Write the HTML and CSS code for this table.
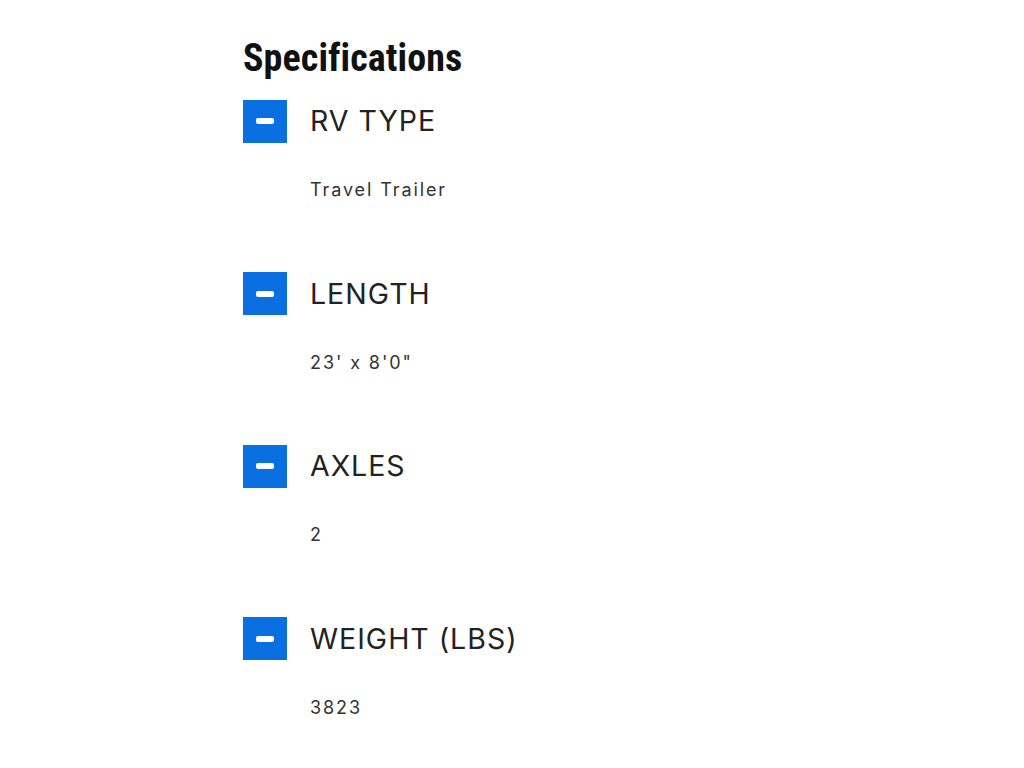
FILE: index.html
```html
<!DOCTYPE html>
<html>
<head>
<meta charset="utf-8">
<link rel="stylesheet" href="styles.css">
</head>
<body>
<section class="specs">
  <h2 class="specs-title">Specifications</h2>
  <div class="spec">
    <div class="spec-head"><span class="toggle"><span class="minus"></span></span><span class="spec-label">RV TYPE</span></div>
    <div class="spec-value">Travel Trailer</div>
  </div>
  <div class="spec">
    <div class="spec-head"><span class="toggle"><span class="minus"></span></span><span class="spec-label">LENGTH</span></div>
    <div class="spec-value">23' x 8'0"</div>
  </div>
  <div class="spec">
    <div class="spec-head"><span class="toggle"><span class="minus"></span></span><span class="spec-label">AXLES</span></div>
    <div class="spec-value">2</div>
  </div>
  <div class="spec">
    <div class="spec-head"><span class="toggle"><span class="minus"></span></span><span class="spec-label">WEIGHT (LBS)</span></div>
    <div class="spec-value">3823</div>
  </div>
</section>
</body>
</html>
```
FILE: styles.css
```css
html, body { margin: 0; padding: 0; background: #fff; }
.specs { margin-left: 243px; padding-top: 36px; }
.specs-title {
  margin: 0;
  font-family: "Roboto Condensed", Roboto, sans-serif;
  font-weight: 700;
  font-size: 38px;
  line-height: 44px;
  letter-spacing: 0.1px;
  color: #111;
  font-stretch: condensed;
}
.spec { height: 172.5px; }
.spec:first-of-type { margin-top: 19px; }
.spec-head { display: flex; align-items: center; gap: 23px; height: 44px; }
.toggle {
  width: 44px; height: 43px; background: #0a6fe0;
  display: flex; align-items: center; justify-content: center; flex: none;
}
.minus { width: 18px; height: 6px; background: #fff; border-radius: 2px; }
.spec-label {
  font-family: Inter, sans-serif;
  font-size: 28.5px;
  font-weight: 400;
  letter-spacing: 1px;
  color: #222;
  line-height: 44px;
}
.spec-value {
  margin: 35px 0 0 67px;
  font-family: Inter, sans-serif;
  font-size: 18px;
  letter-spacing: 1.9px;
  color: #333;
  line-height: 24px;
}
```
